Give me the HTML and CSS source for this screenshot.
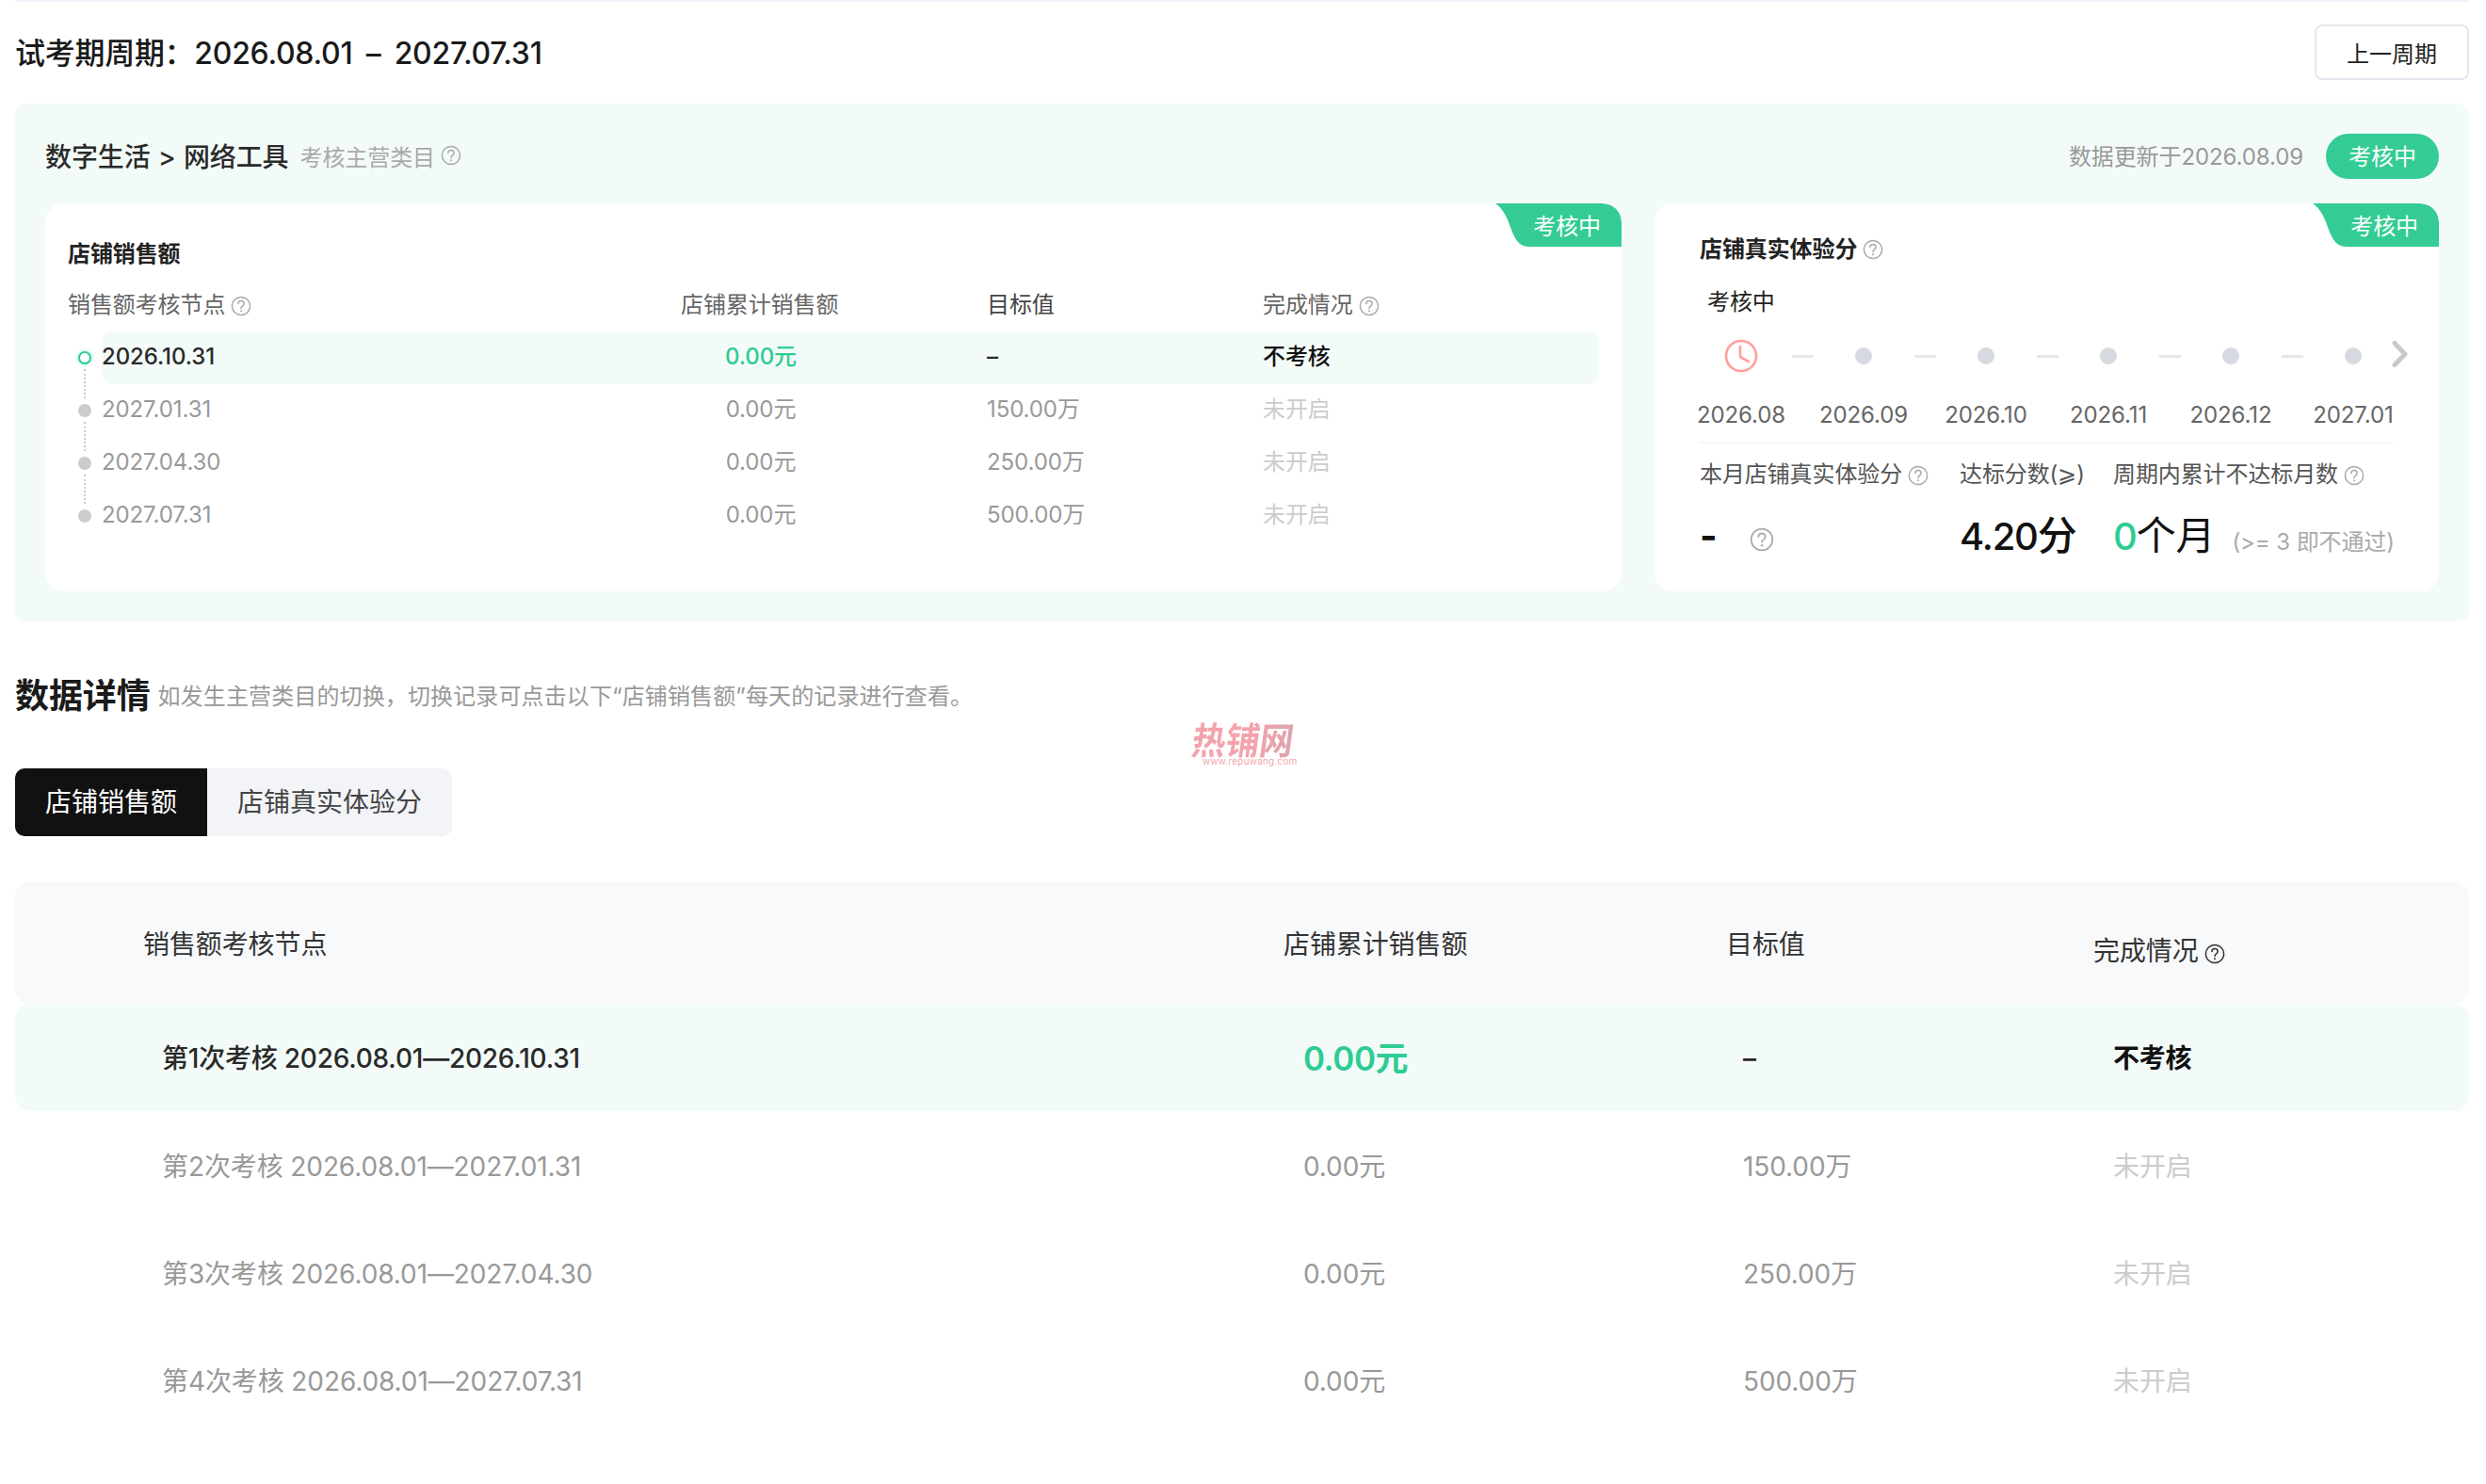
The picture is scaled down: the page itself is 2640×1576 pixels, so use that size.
FILE: index.html
```html
<!DOCTYPE html>
<html lang="zh-CN">
<head>
<meta charset="utf-8">
<title>试考期周期</title>
<link rel="stylesheet" href="styles.css">
</head>
<body>
<svg class="defs" width="0" height="0" aria-hidden="true">
  <symbol id="help" viewBox="0 0 22 22">
    <circle cx="11" cy="11" r="9.6" fill="none" stroke="currentColor" stroke-width="1.5"/>
    <path d="M7.9 8.6c0-1.8 1.3-3 3.1-3s3.1 1.2 3.1 2.8c0 1.3-.7 2-1.7 2.7-.9.6-1.4 1.1-1.4 2.3" fill="none" stroke="currentColor" stroke-width="1.5" stroke-linecap="round"/>
    <circle cx="11" cy="16.3" r="1" fill="currentColor"/>
  </symbol>
</svg>
<div class="strip"></div>
<main class="page">
  <header class="top">
    <h1 class="period">试考期周期：2026.08.01 – 2027.07.31</h1>
    <button class="prev">上一周期</button>
  </header>

  <section class="panel">
    <div class="panel-head">
      <div class="cat">
        <span class="cat-name">数字生活 &gt; 网络工具</span>
        <span class="cat-note">考核主营类目</span>
        <svg class="help h22"><use href="#help"/></svg>
      </div>
      <div class="update">
        <span class="update-text">数据更新于2026.08.09</span>
        <span class="pill">考核中</span>
      </div>
    </div>
    <div class="cards">
      <article class="card card-sales">
        <div class="tag"><svg class="tag-bg" viewBox="0 0 134 46"><path d="M0 0H114A20 20 0 0 1 134 20V46H36C14 46 20 14 0 0Z"/></svg><span class="tag-text">考核中</span></div>
        <h3 class="card-title">店铺销售额</h3>
        <div class="s-head">
          <div class="s-c1">销售额考核节点<svg class="help h22"><use href="#help"/></svg></div>
          <div>店铺累计销售额</div>
          <div class="s-target">目标值</div>
          <div>完成情况<svg class="help h22"><use href="#help"/></svg></div>
        </div>
        <div class="s-row active">
          <div class="node"><i class="ring"></i></div>
          <div class="s-body">
            <div class="date">2026.10.31</div>
            <div class="amt green">0.00元</div>
            <div class="target">–</div>
            <div class="state">不考核</div>
          </div>
        </div>
        <div class="s-row">
          <div class="node"><i class="ball"></i></div>
          <div class="s-body">
            <div class="date">2027.01.31</div>
            <div class="amt">0.00元</div>
            <div class="target">150.00万</div>
            <div class="state">未开启</div>
          </div>
        </div>
        <div class="s-row">
          <div class="node"><i class="ball"></i></div>
          <div class="s-body">
            <div class="date">2027.04.30</div>
            <div class="amt">0.00元</div>
            <div class="target">250.00万</div>
            <div class="state">未开启</div>
          </div>
        </div>
        <div class="s-row last">
          <div class="node"><i class="ball"></i></div>
          <div class="s-body">
            <div class="date">2027.07.31</div>
            <div class="amt">0.00元</div>
            <div class="target">500.00万</div>
            <div class="state">未开启</div>
          </div>
        </div>
      </article>

      <article class="card card-score">
        <div class="tag"><svg class="tag-bg" viewBox="0 0 134 46"><path d="M0 0H114A20 20 0 0 1 134 20V46H36C14 46 20 14 0 0Z"/></svg><span class="tag-text">考核中</span></div>
        <h3 class="card-title score-title">店铺真实体验分<svg class="help h22"><use href="#help"/></svg></h3>
        <div class="phase">考核中</div>
        <div class="track">
          <svg class="clock" viewBox="0 0 36 36"><circle cx="18" cy="18" r="16" fill="none" stroke="#ff9f9a" stroke-width="2.6"/><path d="M17 8V19L26 24" fill="none" stroke="#ff9f9a" stroke-width="2.6" stroke-linecap="round" stroke-linejoin="round"/></svg>
          <i class="dash"></i><i class="pt"></i>
          <i class="dash"></i><i class="pt"></i>
          <i class="dash"></i><i class="pt"></i>
          <i class="dash"></i><i class="pt"></i>
          <i class="dash"></i><i class="pt"></i>
          <svg class="chev" viewBox="0 0 20 30"><path d="M4 3.5L15 15L4 26.5" fill="none" stroke="#c9c9c9" stroke-width="5" stroke-linecap="round" stroke-linejoin="round"/></svg>
        </div>
        <div class="months">
          <span>2026.08</span><span>2026.09</span><span>2026.10</span><span>2026.11</span><span>2026.12</span><span>2027.01</span>
        </div>
        <div class="stats">
          <div class="st-label">本月店铺真实体验分<svg class="help h22"><use href="#help"/></svg></div>
          <div class="st-label">达标分数(⩾)</div>
          <div class="st-label">周期内累计不达标月数<svg class="help h22"><use href="#help"/></svg></div>
          <div class="st-val"><b class="nil">-</b><svg class="help h26"><use href="#help"/></svg></div>
          <div class="st-val"><b class="big"><span class="num">4.20</span>分</b></div>
          <div class="st-val"><b class="big"><em class="zero num">0</em><span class="unit">个月</span></b><span class="hint">(&gt;= 3 即不通过)</span></div>
        </div>
      </article>
    </div>
  </section>

  <section class="detail">
    <div class="detail-head">
      <h2 class="detail-title">数据详情</h2>
      <span class="detail-note">如发生主营类目的切换，切换记录可点击以下“店铺销售额”每天的记录进行查看。</span>
    </div>
    <div class="tabs">
      <div class="tab on">店铺销售额</div>
      <div class="tab">店铺真实体验分</div>
    </div>
    <div class="table">
      <div class="t-head">
        <div>销售额考核节点</div>
        <div>店铺累计销售额</div>
        <div>目标值</div>
        <div class="t-state">完成情况<svg class="help h22 dark"><use href="#help"/></svg></div>
      </div>
      <div class="t-row first">
        <div class="t-name">第1次考核 2026.08.01—2026.10.31</div>
        <div class="t-amt">0.00元</div>
        <div class="t-target">–</div>
        <div class="t-st">不考核</div>
      </div>
      <div class="t-row">
        <div class="t-name">第2次考核 2026.08.01—2027.01.31</div>
        <div class="t-amt">0.00元</div>
        <div class="t-target">150.00万</div>
        <div class="t-st">未开启</div>
      </div>
      <div class="t-row">
        <div class="t-name">第3次考核 2026.08.01—2027.04.30</div>
        <div class="t-amt">0.00元</div>
        <div class="t-target">250.00万</div>
        <div class="t-st">未开启</div>
      </div>
      <div class="t-row">
        <div class="t-name">第4次考核 2026.08.01—2027.07.31</div>
        <div class="t-amt">0.00元</div>
        <div class="t-target">500.00万</div>
        <div class="t-st">未开启</div>
      </div>
    </div>
  </section>
</main>
<div class="mark"><span class="mark-cn">热铺网</span><span class="mark-en">www.repuwang.com</span></div>
</body>
</html>
```
FILE: styles.css
```css
* { box-sizing: border-box; }
html, body { margin: 0; padding: 0; }
body {
  position: relative;
  height: 1576px;
  overflow: hidden;
  background: #fff;
  color: #222;
  font-family: Inter, "Noto Sans CJK SC", sans-serif;
  font-size: 24px;
  letter-spacing: -0.1px;
}
h1, h2, h3 { margin: 0; font-weight: 500; }
.defs { position: absolute; }
.strip { height: 2px; margin: 0 18px 0 16px; background: #eef3fb; }
.page { padding: 0 18px 0 16px; }

.top { display: flex; justify-content: space-between; align-items: center; padding-top: 24px; }
.period { padding-top: 3px; font-size: 32px; line-height: 56px; color: #1a1a1a; letter-spacing: -0.28px; word-spacing: 6px; }
.prev {
  width: 164px; height: 59px; border: 2px solid #e5e6ee; border-radius: 8px; background: #fff;
  font: 24px "Noto Sans CJK SC", sans-serif; color: #222;
}

.panel { margin-top: 25px; padding: 32px 32px 32px; background: #f3fbf8; border-radius: 12px; }
.panel-head { display: flex; justify-content: space-between; align-items: center; height: 48px; margin-bottom: 26px; }
.cat { display: flex; align-items: center; padding-bottom: 2px; }
.cat-name { font-size: 28px; font-weight: 500; color: #2a2a2a; word-spacing: 1px; }
.cat-note { margin-left: 12px; color: #aaa; }
.help { flex: none; color: #aaa; vertical-align: -4px; margin-left: 6px; }
.h22 { width: 22px; height: 22px; }
.h26 { width: 26px; height: 26px; }
.update { display: flex; align-items: center; }
.update-text { padding-bottom: 3px; color: #999; }
.pill {
  margin-left: 24px; width: 120px; height: 48px; padding-bottom: 3px; border-radius: 24px; background: #34cc94; color: #fff;
  display: flex; align-items: center; justify-content: center;
}

.cards { display: flex; gap: 35px; }
.card { position: relative; height: 412px; background: #fff; border-radius: 20px; overflow: hidden; }
.card-sales { width: 1674px; padding: 37px 24px 0; }
.card-score { width: 833px; padding: 32px 0 0 48px; }
.tag {
  position: absolute; top: 0; right: 0; width: 134px; height: 46px; padding-bottom: 2px;
  display: flex; align-items: center; justify-content: flex-end; padding-right: 22px;
}
.tag-bg { position: absolute; inset: 0; width: 134px; height: 46px; fill: #34cc94; }
.tag-text { position: relative; color: #fff; }
.card-title { font-size: 24px; line-height: 34px; font-weight: 700; color: #222; }

.s-head {
  display: grid; grid-template-columns: 651px 325px 293px 1fr; height: 40px; margin-top: 17px; line-height: 40px; color: #666;
}
.s-target { color: #444; }
.s-row { position: relative; display: flex; height: 56px; }
.s-head + .s-row { margin-top: 8px; }
.node { position: relative; flex: none; width: 36px; display: flex; align-items: center; justify-content: center; }
.node::after {
  content: ""; position: absolute; left: 17px; top: 40px; height: 31px; border-left: 2px dotted #ccc;
}
.last .node::after { display: none; }
.ball { width: 14px; height: 14px; border-radius: 50%; background: #ccc; }
.ring { width: 14px; height: 14px; border-radius: 50%; border: 2px solid #2ecc93; background: #fff; box-shadow: 0 0 4px rgba(46, 204, 147, .45); }
.s-body {
  flex: 1; display: grid; grid-template-columns: 615px 325px 293px 1fr; align-items: center; padding-bottom: 3px; line-height: 34px; color: #999; border-radius: 12px;
}
.active .s-body { padding-bottom: 2px; background: #f3fbf8; color: #2a2a2a; font-weight: 500; }
.amt { width: 170px; text-align: center; }
.amt.green { color: #2ecc93; }
.state { color: #ccc; }
.active .state { color: #111; }

.score-title { display: flex; align-items: center; }
.phase { margin: 22px 0 0 8px; line-height: 34px; color: #222; }
.track { display: flex; align-items: center; height: 40px; margin: 20px 0 0 19px; }
.clock { flex: none; width: 36px; height: 36px; margin: 0 7px; }
.dash { flex: none; width: 23px; height: 3px; margin: 0 28px 0 29px; background: #e4e6ea; }
.pt { flex: none; width: 18px; height: 18px; margin: 0 16px; border-radius: 50%; background: #d6d9df; }
.chev { flex: none; width: 20px; height: 30px; margin: -4px 0 0 15px; }
.months { display: grid; grid-template-columns: repeat(6, 130px); margin: 23px 0 0 -21px; line-height: 40px; color: #666; text-align: center; }
.stats {
  display: grid; grid-template-columns: 276px 163px 1fr; width: 737px; margin-top: 8px; padding-top: 13px; border-top: 2px solid #f5f6f7;
}
.st-label { line-height: 40px; color: #555; }
.st-val { display: flex; align-items: baseline; margin-top: 19px; height: 52px; line-height: 52px; color: #111; white-space: nowrap; }
.nil { width: 53px; font-size: 40px; font-weight: 700; }
.big { font-size: 42px; font-weight: 500; white-space: nowrap; }
.num { font-size: 40px; letter-spacing: -1.2px; }
.zero { font-style: normal; color: #2ecc93; }
.hint { margin-left: 18px; color: #aaa; white-space: nowrap; }
.st-val .h26 { align-self: center; margin: 8px 0 0 0; }
.unit { font-weight: 400; }

.detail-head { display: flex; align-items: flex-start; height: 50px; margin-top: 54px; }
.detail-title { font-size: 36px; line-height: 50px; font-weight: 700; color: #1a1a1a; }
.detail-note { margin: 9px 0 0 8px; line-height: 34px; color: #999; letter-spacing: 0.12px; }
.tabs { display: inline-flex; height: 72px; margin-top: 52px; background: #f2f4f8; border-radius: 10px; overflow: hidden; vertical-align: top; letter-spacing: 0; }
.tab { padding: 0 32px; font-size: 28px; line-height: 72px; color: #444; }
.tab.on { background: #111; color: #fff; }

.table { margin-top: 48px; }
.t-head {
  display: grid; grid-template-columns: 1211px 470px 390px 1fr; align-items: center; height: 130px; padding: 0 0 1px 136px;
  background: #f8f9fb; border-radius: 16px; font-size: 28px; color: #333;
}
.t-state { padding-top: 15px; }
.dark { color: #333; }
.t-row {
  display: grid; grid-template-columns: 1212px 467px 393px 1fr; align-items: center; height: 114.4px; padding: 2px 0 0 156px;
  font-size: 28px; line-height: 40px; color: #999; border-radius: 16px;
}
.first { background: #f3fbf8; color: #2a2a2a; font-weight: 500; letter-spacing: -0.22px; }
.t-st { color: #ccc; }
.first .t-st { color: #111; font-weight: 700; }
.first .t-amt { color: #2ecc93; font-size: 35px; font-weight: 600; letter-spacing: -0.5px; }

.mark { position: absolute; left: 1266px; top: 762px; width: 112px; height: 54px; color: #f3a5ac; pointer-events: none; }
.mark-cn {
  display: block; margin-top: 3px; font-size: 36px; line-height: 44px; font-weight: 700; white-space: nowrap; transform: skewX(-8deg) scaleY(1.1);
  background: linear-gradient(90deg, #f4a3ac 55%, #d9a4ab); -webkit-background-clip: text; background-clip: text; color: transparent;
}
.mark-en { position: absolute; left: 11px; top: 40px; font-size: 10px; line-height: 12px; letter-spacing: 0.2px; white-space: nowrap; }
```
